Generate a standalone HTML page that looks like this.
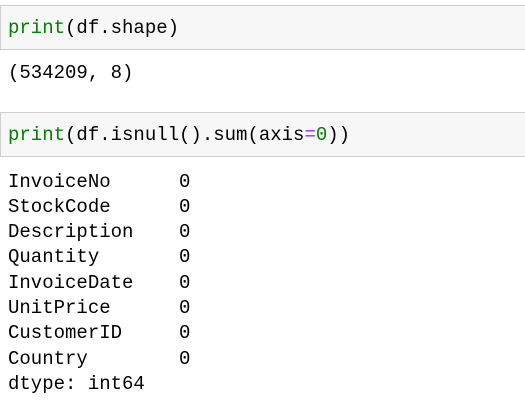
<!DOCTYPE html>
<html><head><meta charset="utf-8"><style>
body{margin:0;width:525px;height:406px;background:#fff;overflow:hidden;font-family:"Liberation Mono",monospace;font-size:19px;color:#000;position:relative}
.box{position:absolute;left:0;width:530px;height:43px;background:#f7f7f7;border:1px solid #cfcfcf;box-sizing:content-box}
.t{position:absolute;left:8px;white-space:pre;line-height:25.3px}
.g{color:#008000}.p{color:#aa22ff}
</style></head><body>
<div class="box" style="top:5px"></div>
<div class="t" style="top:16px"><span class="g">print</span>(df.shape)</div>
<div class="t" style="top:61px">(534209, 8)</div>
<div class="box" style="top:112px"></div>
<div class="t" style="top:123px"><span class="g">print</span>(df.isnull().sum(axis<span class="p">=</span><span class="g">0</span>))</div>
<div class="t" style="top:169.5px">InvoiceNo      0
StockCode      0
Description    0
Quantity       0
InvoiceDate    0
UnitPrice      0
CustomerID     0
Country        0
dtype: int64</div>
</body></html>
